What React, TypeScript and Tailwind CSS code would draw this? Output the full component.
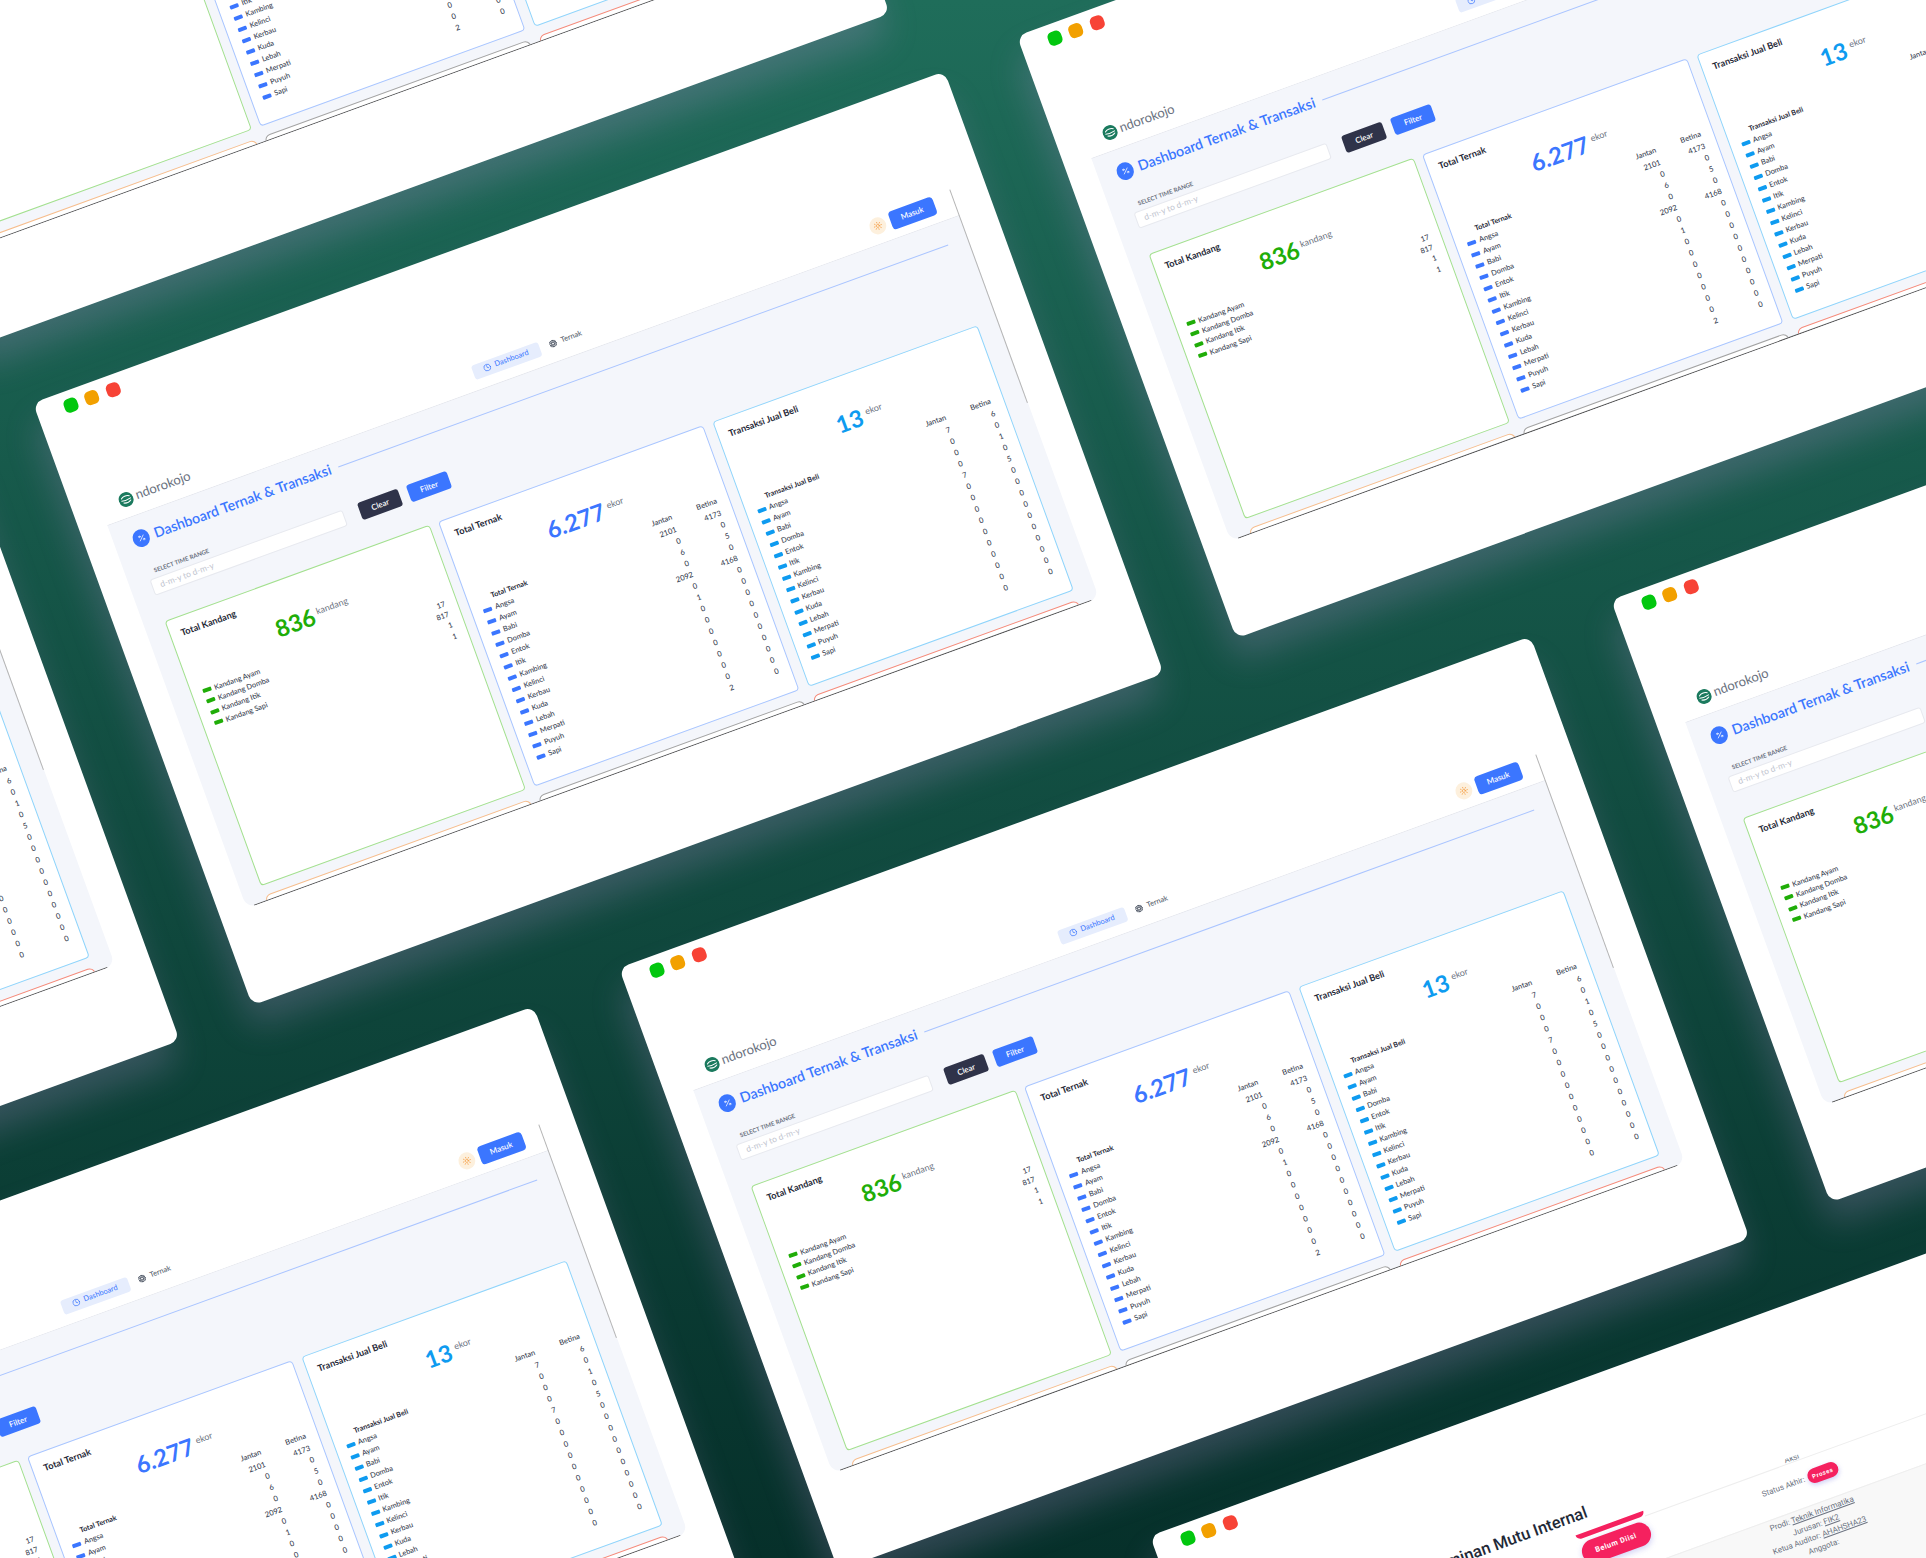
import React from "react";
import { Sun, Clock, Aperture, Percent } from "lucide-react";

const BASE = "absolute w-[970px] h-[641px] rounded-[10px] bg-white origin-top-left rotate-[-20deg] overflow-hidden shadow-[-8px_22px_34px_rgba(200,150,225,0.22)]";

const SANS = "font-['Lato',sans-serif]";

function Dots() {
  return (
    <div className="flex gap-[8.5px] pl-[27.5px] pt-[8px] h-[22px]">
      <span className="w-[14px] h-[14px] rounded-[5px] bg-[#02c70f]" />
      <span className="w-[14px] h-[14px] rounded-[5px] bg-[#f2a000]" />
      <span className="w-[14px] h-[14px] rounded-[5px] bg-[#f74336]" />
    </div>
  );
}

function Logo() {
  return (
    <svg viewBox="0 0 16 16" className="w-[15px] h-[15px] shrink-0">
      <circle cx="8" cy="8" r="8" fill="#1b7a5e" />
      <path d="M3.5 5.8c2-2 6-2.2 9 -.4M3 8.2c3 .8 7 .6 10-.2M4.5 10.8c2.5 1.2 5.500 1.200 8-.6" stroke="#fff" strokeWidth="1.100" fill="none" strokeLinecap="round" />
    </svg>
  );
}

function Legend({ items, color }: { items: string[]; color: string }) {
  return (
    <>
      {items.map((t) => (
        <div key={t} className="flex items-center h-[12px] gap-[3.5px] text-[7.4px] leading-[12px] font-medium text-[#374151]">
          <span className={"w-[9px] h-[4px] rounded-[1px] " + color} />
          <span>{t}</span>
        </div>
      ))}
    </>
  );
}

function ValueCol({ head, vals, w }: { head: string; vals: string[]; w: string }) {
  return (
    <div className={"text-right text-[7.6px] leading-[12px] font-medium text-[#374151] " + w}>
      <div className="h-[12px] text-[7.5px]">{head}</div>
      {vals.map((v, i) => (
        <div key={i} className="h-[12px]">{v}</div>
      ))}
    </div>
  );
}

const ANIMALS = ["Angsa", "Ayam", "Babi", "Domba", "Entok", "Itik", "Kambing", "Kelinci", "Kerbau", "Kuda", "Lebah", "Merpati", "Puyuh", "Sapi"];

function AnimalCard({ title, num, border, text, bar, j, b }: { title: string; num: string; border: string; text: string; bar: string; j: string[]; b: string[] }) {
  return (
    <div className={"h-[282.5px] bg-white rounded-[4px] border pl-[11px] pr-[12px] pt-[7px] " + border}>
      <div className="h-[18px] text-[9.2px] leading-[18px] font-bold text-[#1f2937]">{title}</div>
      <div className="mt-[6px] h-[28px] flex justify-center">
        <span className={"text-[23.5px] leading-[28px] font-bold " + text}>{num}</span>
        <span className="ml-[4px] mt-[5px] text-[9px] leading-[11px] text-[#6b7280]">ekor</span>
      </div>
      <div className="mt-[10px] flex">
        <div className="flex-1">
          <div className="h-[12px]" />
          <div className="h-[12px] pl-[12.5px] text-[7.2px] leading-[12px] font-bold text-[#1f2937]">{title}</div>
          <Legend items={ANIMALS} color={bar} />
        </div>
        <ValueCol head="Jantan" vals={j} w="w-[40px]" />
        <ValueCol head="Betina" vals={b} w="w-[47.5px]" />
      </div>
    </div>
  );
}

function KandangCard() {
  const rows = [["Kandang Ayam", "17"], ["Kandang Domba", "817"], ["Kandang Itik", "1"], ["Kandang Sapi", "1"]];
  return (
    <div className="h-[282.5px] bg-white rounded-[4px] border border-[#a3e08f] pl-[11px] pr-[11px] pt-[7px]">
      <div className="h-[18px] text-[9.2px] leading-[18px] font-bold text-[#1f2937]">Total Kandang</div>
      <div className="mt-[6px] h-[28px] flex justify-center">
        <span className="text-[23.5px] leading-[28px] font-bold text-[#20ad08]">836</span>
        <span className="ml-[3px] mt-[5px] text-[9px] leading-[11px] text-[#6b7280]">kandang</span>
      </div>
      <div className="mt-[14px]">
        {rows.map(([l, v]) => (
          <div key={l} className="flex items-center h-[11.3px] gap-[3.5px] text-[7.4px] leading-[11px] font-medium text-[#374151]">
            <span className="w-[9px] h-[4px] rounded-[1px] bg-[#20ad08]" />
            <span className="flex-1">{l}</span>
            <span>{v}</span>
          </div>
        ))}
      </div>
    </div>
  );
}

function Dash({ pos }: { pos: string }) {
  return (
    <div className={BASE + " " + pos + " " + SANS}>
      <Dots />
      <div className="h-[36px] mt-[82px] flex items-center pl-[46.5px] pr-[55.5px]">
        <div className="w-[377px] flex items-center gap-[3.5px]">
          <Logo />
          <span className="text-[13px] text-[#6b7280]">ndorokojo</span>
        </div>
        <div className="w-[71px] h-[15px] rounded-[3px] bg-[#e6edfd] flex items-center justify-center gap-[4px] text-[7.500px] text-[#3b76ff]">
          <Clock className="w-[8px] h-[8px]" />
          <span>Dashboard</span>
        </div>
        <div className="ml-[10px] flex items-center gap-[5px] text-[7.500px] text-[#4b5563]">
          <Aperture className="w-[8px] h-[8px] text-[#374151]" />
          <span>Ternak</span>
        </div>
        <div className="ml-auto w-[17px] h-[17px] rounded-full bg-[#fdf0dd] flex items-center justify-center">
          <Sun className="w-[9px] h-[9px] text-[#f59f45]" />
        </div>
        <div className="ml-[5px] w-[47px] h-[19px] rounded-[4px] bg-[#3b76ff] flex items-center justify-center text-[8px] font-semibold text-white">Masuk</div>
      </div>
      <div className="ml-[27.5px] w-[907px] h-[408px] bg-[#f4f6fb] border-t border-t-[#e6e8ee] rounded-b-[10px] overflow-hidden flex flex-col">
        <div className="flex-1 min-h-0 overflow-hidden px-[21px] pt-[14px]">
          <div className="flex items-center h-[18px] -ml-[1.500px]">
            <span className="w-[17.500px] h-[17.500px] rounded-full bg-[#3b76ff] flex items-center justify-center">
              <Percent className="w-[8px] h-[8px] text-white" />
            </span>
            <span className="ml-[5px] w-[193px] whitespace-nowrap text-[14.2px] leading-[18px] font-semibold text-[#3b76ff]">Dashboard Ternak &amp; Transaksi</span>
            <span className="ml-[3px] w-[649px] h-px bg-[#a9c4ff]" />
          </div>
          <div className="mt-[22px] flex items-end">
            <div className="w-[205px]">
              <div className="h-[11px] pl-[8px] text-[6px] leading-[8px] font-bold text-[#6b7280]">SELECT TIME RANGE</div>
              <div className="h-[16.500px] rounded-[3px] bg-white border border-[#e7e9ef] pl-[8px] text-[8.500px] leading-[15px] text-[#c2c6d0]">d-m-y to d-m-y</div>
            </div>
            <div className="ml-[16.500px] w-[43px] h-[17.500px] rounded-[3px] bg-[#2f3349] flex items-center justify-center text-[8px] font-semibold text-white">Clear</div>
            <div className="ml-[9px] w-[43px] h-[17.500px] rounded-[3px] bg-[#3b76ff] flex items-center justify-center text-[8px] font-semibold text-white">Filter</div>
          </div>
          <div className="mt-[27px] grid grid-cols-3 gap-x-[9.500px] gap-y-[9.500px]">
            <KandangCard />
            <AnimalCard title="Total Ternak" num="6.277" border="border-[#a8c5ff]" text="text-[#3b76ff]" bar="bg-[#3b76ff]" j={["2101", "0", "6", "0", "2092", "0", "1", "0", "0", "0", "0", "0", "0", "0", "2"]} b={["4173", "0", "5", "0", "4168", "0", "0", "0", "0", "0", "0", "0", "0", "0", "0"]} />
            <AnimalCard title="Transaksi Jual Beli" num="13" border="border-[#8fd4fb]" text="text-[#0e9bf0]" bar="bg-[#0e9bf0]" j={["7", "0", "0", "0", "7", "0", "0", "0", "0", "0", "0", "0", "0", "0", "0"]} b={["6", "0", "1", "0", "5", "0", "0", "0", "0", "0", "0", "0", "0", "0", "0"]} />
            <div className="h-[30px] rounded-[6px] bg-white border border-[#f6bd8d]" />
            <div className="h-[30px] rounded-[6px] bg-white border border-[#a3a3a3]" />
            <div className="h-[30px] rounded-[6px] bg-white border border-[#f58a7a]" />
          </div>
        </div>
        <div className="h-px mx-[8px] bg-[#555]" />
      </div>
      <div className="absolute left-[933.5px] top-[113px] w-px h-[227px] bg-[#b5b5b5]" />
    </div>
  );
}

function Audit() {
  return (
    <div className={BASE + " left-[1150px] top-[1536px] font-['Roboto',sans-serif]"}>
      <Dots />
      <div className="mt-[95px] h-[28px] w-[418.5px] text-right text-[16.500px] leading-[20px] font-medium whitespace-nowrap text-[#1f2937]">Penjaminan Mutu Internal</div>
      <div className="absolute left-[471.5px] right-0 top-[150px] h-px bg-[#eeeeee]" />
      <div className="flex h-[52px]">
        <div className="ml-[399.5px] w-[72px]">
          <div className="h-[5px] rounded-b-[8px] bg-[#f5215f]" />
          <div className="mt-[4px] h-[24px] rounded-full bg-[#f5215f] shadow-[0_2px_6px_rgba(130,130,230,0.4)] flex items-center justify-center text-[7.500px] font-bold tracking-[0.5px] text-white">Belum Diisi</div>
        </div>
        <div className="ml-[58px] w-[200px] text-center text-[8px] text-[#6b7280]">
          <div className="h-[7px] overflow-hidden flex items-end justify-center">
            <span className="leading-[8px] block mb-[1px]">Aksi</span>
          </div>
          <div className="mt-[11px] h-[15px] flex items-center justify-center gap-[3px]">
            <span>Status Akhir:</span>
            <span className="h-[15px] w-[32px] rounded-full bg-[#f5215f] shadow-[0_2px_5px_rgba(130,130,230,0.4)] flex items-center justify-center text-[6px] font-bold tracking-[0.5px] text-white">Proses</span>
          </div>
        </div>
      </div>
      <div className="h-[300px] bg-[#f8f8f8] border-t border-[#eeeeee] pt-[2px]">
        <div className="ml-[529.5px] w-[200px] text-center text-[8px] leading-[11.5px] text-[#6b7280]">
          <div>Prodi: <span className="underline">Teknik Informatika</span></div>
          <div>Jurusan: <span className="underline">FIK2</span></div>
          <div>Ketua Auditor: <span className="underline">AHAHSHA23</span></div>
          <div>Anggota:</div>
        </div>
      </div>
    </div>
  );
}

export default function App() {
  return (
    <div className="relative w-[1926px] h-[1558px] overflow-hidden bg-linear-to-b from-[#1f6d5a] to-[#06302a]">
      <Dash pos="left-[-241px] top-[-257px]" />
      <Dash pos="left-[1017px] top-[36px]" />
      <Dash pos="left-[-951px] top-[770px]" />
      <Dash pos="left-[33px] top-[403px]" />
      <Dash pos="left-[1611px] top-[600px]" />
      <Dash pos="left-[-378px] top-[1338px]" />
      <Dash pos="left-[619px] top-[968px]" />
      <Audit />
    </div>
  );
}
